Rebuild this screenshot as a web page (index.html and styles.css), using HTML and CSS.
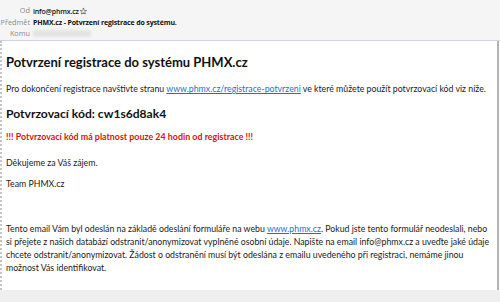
FILE: index.html
```html
<!DOCTYPE html>
<html lang="cs">
<head>
<meta charset="utf-8">
<link rel="stylesheet" href="styles.css">
</head>
<body>
<div class="header">
  <div class="hrow"><span class="lbl">Od</span><span class="val from">info@phmx.cz<span class="star">✩</span></span></div>
  <div class="hrow"><span class="lbl">Předmět</span><span class="val subj">PHMX.cz - Potvrzení registrace do systému.</span></div>
  <div class="hrow"><span class="lbl">Komu</span><span class="val"><span class="blur"></span></span></div>
</div>
<div class="main">
  <div class="content">
    <h1 class="title">Potvrzení registrace do systému PHMX.cz</h1>
    <p class="p p1">Pro dokončení registrace navštivte stranu <a class="link">www.phmx.cz/registrace-potvrzeni</a> ve které můžete použít potvrzovací kód viz níže.</p>
    <p class="code">Potvrzovací kód: cw1s6d8ak4</p>
    <p class="warn">!!! Potvrzovací kód má platnost pouze 24 hodin od registrace !!!</p>
    <p class="p thanks">Děkujeme za Váš zájem.</p>
    <p class="p">Team PHMX.cz</p>
    <p class="p foot">Tento email Vám byl odeslán na základě odeslání formuláře na webu <a class="link">www.phmx.cz</a>. Pokud jste tento formulář neodeslali, nebo si přejete z našich databází odstranit/anonymizovat vyplněné osobní údaje. Napište na email info@phmx.cz a uveďte jaké údaje chcete odstranit/anonymizovat. Žádost o odstranění musí být odeslána z emailu uvedeného při registraci, nemáme jinou možnost Vás identifikovat.</p>
  </div>
</div>
<div class="bottom"></div>
</body>
</html>
```
FILE: styles.css
```css
html, body { margin: 0; padding: 0; }
body {
  width: 500px;
  height: 302px;
  overflow: hidden;
  background: #fff;
  font-family: Lato, "Open Sans", sans-serif;
  color: #1a1a1a;
  display: flex;
  flex-direction: column;
}
.header {
  height: 41px;
  flex: none;
  background: #f5f5f5;
  border-bottom: 1px solid #cdd6e0;
  padding-top: 5px;
  box-sizing: border-box;
  font-family: "Open Sans", sans-serif;
  font-size: 7px;
}
.hrow {
  display: grid;
  grid-template-columns: 30px 1fr;
  column-gap: 3px;
  height: 11.5px;
  line-height: 11.5px;
}
.lbl { text-align: right; color: #8a8a8a; font-size: 7.3px; }
.val { color: #111; letter-spacing: -0.15px; }
.from { font-weight: 600; }
.subj { font-weight: 700; }
.star { font-weight: 700; font-size: 8px; margin-left: 1px; }
.blur {
  display: inline-block;
  width: 58px;
  height: 7px;
  margin-top: 2px;
  vertical-align: top;
  background: #e4e4e4;
  filter: blur(1px);
  border-radius: 2px;
}
.main {
  flex: 1;
  display: flex;
  border-left: 2px dotted #c4c4c4;
  border-right: 2px solid #b3b3b3;
  margin-right: 1px;
}
.content {
  flex: 1;
  padding: 13px 6px 0 4px;
}
.title {
  margin: 0 0 13px;
  font-size: 13px;
  font-weight: 700;
  line-height: 16px;
  color: #111;
}
.p {
  margin: 0;
  font-size: 8.75px;
  line-height: 12px;
}
.link { color: #1f6fd1; text-decoration: underline; }
.code {
  margin: 10.5px 0 0;
  font-size: 12.1px;
  font-weight: 700;
  line-height: 15px;
  color: #111;
}
.warn {
  margin: 10.5px 0 0;
  color: #e01010;
  font-size: 8.9px;
  font-weight: 700;
  line-height: 12px;
}
.thanks { margin-top: 14px; margin-bottom: 9px; }
.foot { margin-top: 31.5px; line-height: 13px; }
.bottom {
  height: 12px;
  flex: none;
  background: #efefef;
}
```
